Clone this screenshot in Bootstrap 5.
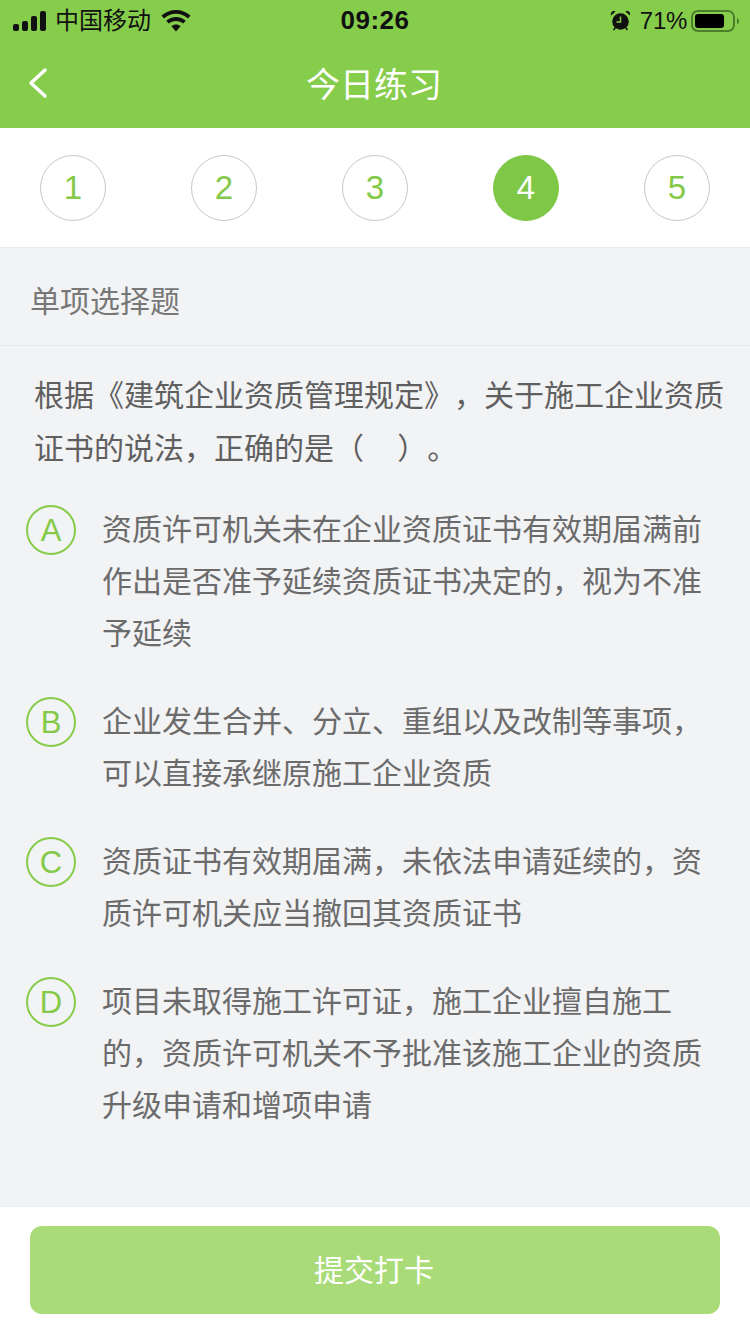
<!DOCTYPE html>
<html lang="zh-CN">
<head>
<meta charset="utf-8">
<title>今日练习</title>
<link href="https://cdn.jsdelivr.net/npm/bootstrap@5.3.0/dist/css/bootstrap.min.css" rel="stylesheet">
<style>
html,body{height:1334px;overflow:hidden}
body{width:750px;background:#f2f3f5;font-family:"Liberation Sans","Noto Sans CJK SC",sans-serif;color:#666;text-spacing-trim:space-all}
.shell{height:1334px}
.top-area{background:#87cd4c;height:128px}
.status-row{height:41px;padding:0 9px 0 13px;color:#111;font-size:25px;line-height:41px}
.status-side{width:300px}
.carrier{margin-left:7px;font-size:24px}
.wifi-icon{margin-left:10px}
.clock-text{font-size:26px;font-weight:700;letter-spacing:.5px;margin-right:4px}
.pct{font-size:24px;margin-left:9px;letter-spacing:-.3px}
.title-row{height:87px}
.back-btn{left:27px;top:26px;width:22px;height:32px}
.page-title{font-size:34px;color:#fff;line-height:89px;padding-right:2px}
.stepper{height:120px;background:#fff;border-bottom:1px solid #e7e9eb;padding:0 40px}
.step-dot{width:66px;height:66px;border:1px solid #c8c8c8;border-radius:50%;color:#84c947;font-size:33px;line-height:1}
.step-dot.on{background:#7fc847;border-color:#7fc847;color:#fff}
.q-type{height:98px;border-bottom:1px solid #e5e7e9;padding-left:30px;font-size:30px;color:#777;line-height:1}
.q-type span{margin-top:11px}
.q-stem{padding:23px 20px 0 34px;font-size:30px;line-height:53px;color:#5f5f5f}
.opt-list{padding:0 44px 0 26px;margin-top:29px}
.opt-item{font-size:30px;line-height:52px;color:#6b6b6b;margin-bottom:36px}
.opt-mark{flex:0 0 50px;width:50px;height:50px;border:2px solid #87cd4c;border-radius:50%;color:#84c947;font-size:31px;line-height:1;margin-top:1px;margin-right:26px}
.submit-bar{height:128px;background:#fff;border-top:1px solid #e9ebee;padding:19px 30px 0}
.submit-btn{width:690px;height:88px;background:#a9dc78;border:0;border-radius:12px;color:#fff;font-size:30px;padding:0 2px 0 0}
.submit-btn:disabled{background:#a9dc78;color:#fff;opacity:1}
.page-body{height:958px}
</style>
</head>
<body>
<div class="shell d-flex flex-column">
  <header class="top-area">
    <div class="status-row d-flex justify-content-between align-items-center">
      <div class="status-side d-flex align-items-center">
        <svg width="35" height="20" viewBox="0 0 35 20" fill="#111"><rect x="0" y="13" width="6" height="7" rx="2"/><rect x="9" y="10" width="6" height="10" rx="2"/><rect x="18" y="5" width="6" height="15" rx="2"/><rect x="27" y="0" width="6" height="20" rx="2"/></svg>
        <span class="carrier">中国移动</span>
        <svg class="wifi-icon" width="30" height="22" viewBox="0 0 30 22" fill="#111"><path d="M15 0c5.500 0 10.500 2 14.500 5.500L27 8.500C23.700 5.500 19.500 3.800 15 3.800S6.300 5.500 3 8.500L.5 5.500C4.500 2 9.500 0 15 0z"/><path d="M15 7c3.800 0 7.200 1.400 9.800 3.700l-2.600 2.900c-1.900-1.700-4.400-2.700-7.200-2.700s-5.300 1-7.200 2.700l-2.600-2.900C7.800 8.400 11.200 7 15 7z"/><path d="M15 14.500c1.800 0 3.400.6 4.600 1.700L15 21.500l-4.600-5.300c1.200-1.100 2.800-1.700 4.600-1.700z"/></svg>
      </div>
      <span class="clock-text">09:26</span>
      <div class="status-side d-flex align-items-center justify-content-end">
        <svg width="21" height="21" viewBox="0 0 21 21" fill="#111"><circle cx="10.500" cy="11.500" r="8.300"/><path d="M1 5.500 5.500 1.500C3 0 .2 2.500 1 5.500zM20 5.500 15.500 1.500C18 0 20.800 2.500 20 5.500z"/><path d="M3.500 20l2-2.500M17.500 20l-2-2.500" stroke="#111" stroke-width="1.500"/><path d="M10.500 6.500V12H6.500" stroke="#87cd4c" stroke-width="1.500" fill="none"/></svg>
        <span class="pct">71%</span>
        <svg class="ms-1" width="50" height="24" viewBox="0 0 50 24"><rect x="1" y="2" width="42" height="20" rx="6" fill="none" stroke="#4c7f2c" stroke-width="2"/><rect x="4" y="5" width="29" height="14" rx="3" fill="#000"/><path d="M46 9c1.500.5 2 1.500 2 3s-.5 2.500-2 3z" fill="#4c7f2c"/></svg>
      </div>
    </div>
    <div class="title-row position-relative text-center">
      <svg class="back-btn position-absolute" viewBox="0 0 22 32" fill="none"><path d="M18 3 4 16l14 13" stroke="#fff" stroke-width="3.500" stroke-linecap="round" stroke-linejoin="round"/></svg>
      <div class="page-title">今日练习</div>
    </div>
  </header>

  <nav class="stepper d-flex justify-content-between align-items-center">
    <div class="step-dot d-flex align-items-center justify-content-center">1</div>
    <div class="step-dot d-flex align-items-center justify-content-center">2</div>
    <div class="step-dot d-flex align-items-center justify-content-center">3</div>
    <div class="step-dot on d-flex align-items-center justify-content-center">4</div>
    <div class="step-dot d-flex align-items-center justify-content-center">5</div>
  </nav>

  <main class="page-body flex-grow-1">
    <div class="q-type d-flex align-items-center"><span>单项选择题</span></div>
    <p class="q-stem mb-0">根据《建筑企业资质管理规定》，关于施工企业资质证书的说法，正确的是（&nbsp;&nbsp;&nbsp;&nbsp;）。</p>
    <div class="opt-list">
      <div class="opt-item d-flex">
        <div class="opt-mark d-flex align-items-center justify-content-center">A</div>
        <div>资质许可机关未在企业资质证书有效期届满前作出是否准予延续资质证书决定的，视为不准予延续</div>
      </div>
      <div class="opt-item d-flex">
        <div class="opt-mark d-flex align-items-center justify-content-center">B</div>
        <div>企业发生合并、分立、重组以及改制等事项，可以直接承继原施工企业资质</div>
      </div>
      <div class="opt-item d-flex">
        <div class="opt-mark d-flex align-items-center justify-content-center">C</div>
        <div>资质证书有效期届满，未依法申请延续的，资质许可机关应当撤回其资质证书</div>
      </div>
      <div class="opt-item d-flex">
        <div class="opt-mark d-flex align-items-center justify-content-center">D</div>
        <div>项目未取得施工许可证，施工企业擅自施工的，资质许可机关不予批准该施工企业的资质升级申请和增项申请</div>
      </div>
    </div>
  </main>

  <footer class="submit-bar">
    <button class="submit-btn btn d-block" type="button" disabled>提交打卡</button>
  </footer>
</div>
<script src="https://cdn.jsdelivr.net/npm/bootstrap@5.3.0/dist/js/bootstrap.bundle.min.js"></script>
</body>
</html>
